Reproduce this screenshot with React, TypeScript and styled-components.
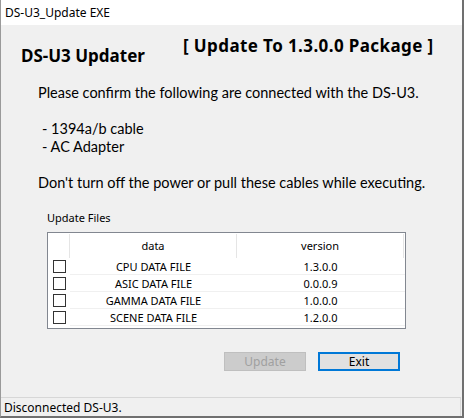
import React from 'react';
import styled, { createGlobalStyle } from 'styled-components';

const GlobalStyle = createGlobalStyle`
  html, body {
    margin: 0;
    padding: 0;
    background: #ffffff;
  }
  * {
    box-sizing: border-box;
  }
`;

const Window = styled.div`
  width: 464px;
  height: 418px;
  display: flex;
  flex-direction: column;
  background: #f0f0f0;
  border-left: 1px solid #9a9a9a;
  border-right: 2px solid #707070;
  border-bottom: 2px solid #707070;
  font-family: 'Noto Sans', 'Liberation Sans', sans-serif;
  color: #000;
`;

const TitleBar = styled.div`
  height: 25px;
  flex: none;
  background: #ffffff;
  padding-left: 4px;
  font-size: 12px;
  line-height: 25px;
`;

const Body = styled.div`
  flex: 1;
  display: flex;
  flex-direction: column;
`;

const HeaderRow = styled.div`
  display: flex;
  align-items: flex-start;
  margin-top: 10px;
  padding-left: 20px;
`;

const Heading = styled.div`
  width: 162px;
  margin-top: 10px;
  font-size: 17px;
  font-weight: 700;
  line-height: 22px;
`;

const PackageLabel = styled.div`
  font-size: 17px;
  font-weight: 700;
  line-height: 22px;
  letter-spacing: 0.4px;
  white-space: pre;
`;

const Message = styled.div`
  margin-top: 17px;
  padding-left: 37px;
  font-family: Lato, 'Noto Sans', sans-serif;
  font-size: 14.5px;
  line-height: 18px;
`;

const Line = styled.div<{ $gap?: boolean; $indent?: boolean }>`
  margin-top: ${p => (p.$gap ? '18px' : '0')};
  padding-left: ${p => (p.$indent ? '4px' : '0')};
  white-space: pre;
`;

const GroupLabel = styled.div`
  margin-top: 18px;
  padding-left: 46px;
  font-size: 11px;
  line-height: 15px;
`;

const Table = styled.div`
  margin: 7px 0 0 46px;
  width: 359px;
  height: 97px;
  border: 1px solid #828790;
  background: #ffffff;
  display: grid;
  grid-template-columns: 22px 167px 167px 1fr;
  grid-auto-rows: 17px;
  grid-template-rows: 25px;
  align-content: start;
  font-size: 11px;
`;

const HeadCell = styled.div<{ $divider?: boolean }>`
  display: flex;
  align-items: center;
  justify-content: center;
  margin-top: 1px;
  padding-bottom: 2px;
  border-right: ${p => (p.$divider ? '1px solid #e5e5e5' : 'none')};
`;

const CheckCell = styled.div`
  display: flex;
  align-items: center;
  padding-left: 5px;
`;

const Cell = styled.div`
  display: flex;
  align-items: center;
  justify-content: center;
  border-bottom: 1px solid #f0f0f0;
`;

const Checkbox = styled.span`
  width: 13px;
  height: 13px;
  border: 1px solid #333333;
  background: #ffffff;
`;

const ButtonRow = styled.div`
  display: flex;
  gap: 12px;
  margin-top: 23px;
  padding-left: 223px;
`;

const Button = styled.button<{ $focused?: boolean }>`
  width: 82px;
  height: 19px;
  padding: 0;
  font-family: 'Noto Sans', 'Liberation Sans', sans-serif;
  font-size: 12px;
  line-height: 15px;
  background: ${p => (p.$focused ? '#e1e1e1' : '#cccccc')};
  border: ${p => (p.$focused ? '2px solid #0078d7' : '1px solid #bfbfbf')};
  color: ${p => (p.$focused ? '#000000' : '#a0a0a0')};
`;

const StatusBar = styled.div`
  height: 19px;
  flex: none;
  border-top: 1px solid #d7d7d7;
  border-right: 1px solid #dadada;
  margin-right: 1px;
  padding-left: 3px;
  font-size: 12px;
  line-height: 20px;
`;

const files = [
  { name: 'CPU DATA FILE', version: '1.3.0.0' },
  { name: 'ASIC DATA FILE', version: '0.0.0.9' },
  { name: 'GAMMA DATA FILE', version: '1.0.0.0' },
  { name: 'SCENE DATA FILE', version: '1.2.0.0' }
];

export default function App() {
  return (
    <>
      <GlobalStyle />
      <Window>
        <TitleBar>DS-U3_Update EXE</TitleBar>
        <Body>
          <HeaderRow>
            <Heading>DS-U3 Updater</Heading>
            <PackageLabel>[ Update To 1.3.0.0 Package ]</PackageLabel>
          </HeaderRow>
          <Message>
            <Line>Please confirm the following are connected with the DS-U3.</Line>
            <Line $gap $indent>- 1394a/b cable</Line>
            <Line $indent>- AC Adapter</Line>
            <Line $gap>Don't turn off the power or pull these cables while executing.</Line>
          </Message>
          <GroupLabel>Update Files</GroupLabel>
          <Table>
            <HeadCell $divider />
            <HeadCell $divider>data</HeadCell>
            <HeadCell $divider>version</HeadCell>
            <HeadCell />
            {files.map(f => (
              <React.Fragment key={f.name}>
                <CheckCell>
                  <Checkbox />
                </CheckCell>
                <Cell>{f.name}</Cell>
                <Cell>{f.version}</Cell>
                <Cell />
              </React.Fragment>
            ))}
          </Table>
          <ButtonRow>
            <Button disabled>Update</Button>
            <Button $focused>Exit</Button>
          </ButtonRow>
        </Body>
        <StatusBar>Disconnected DS-U3.</StatusBar>
      </Window>
    </>
  );
}
